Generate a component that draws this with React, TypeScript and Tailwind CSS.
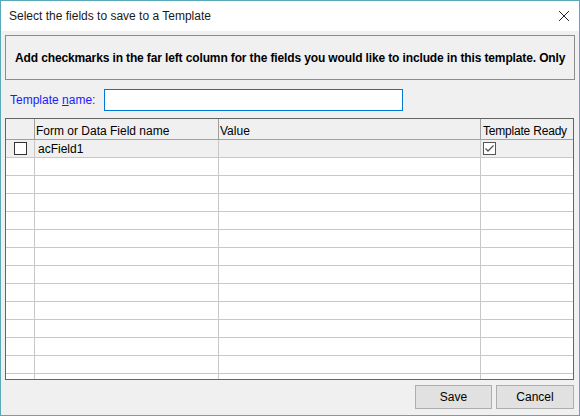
import { useState } from 'react';

const font = { fontFamily: '"Liberation Sans", Arial, sans-serif' };

const EMPTY_ROWS = 13;

function CheckBox({ checked, disabled }: { checked?: boolean; disabled?: boolean }) {
  return (
    <div
      className={`w-[13px] h-[13px] bg-white border flex items-center justify-center ${
        disabled ? 'border-[#555555]' : 'border-[#333333]'
      }`}
    >
      {checked && (
        <svg width="11" height="11" viewBox="0 0 11 11">
          <path d="M1.5 5.5 L4 8 L9.5 2.5" fill="none" stroke={disabled ? '#555' : '#333'} strokeWidth="1.3" />
        </svg>
      )}
    </div>
  );
}

export default function App() {
  const [name, setName] = useState('');

  return (
    <div
      className="w-[580px] h-[416px] border border-[#5aa8b9] bg-[#f0f0f0] flex flex-col text-[12px] text-black"
      style={font}
    >
      {/* Title bar */}
      <div className="h-[30px] bg-white flex items-center justify-between pl-[8px] pr-[9px] shrink-0">
        <span className="text-[12px] text-[#1a1a1a]">Select the fields to save to a Template</span>
        <svg width="12" height="12" viewBox="0 0 12 12">
          <path d="M1 1 L11 11 M11 1 L1 11" stroke="#222" strokeWidth="1" />
        </svg>
      </div>

      {/* Instructions */}
      <div className="mt-[4px] ml-[4px] w-[570px] h-[45px] border border-[#8c8c8c] flex items-center pl-[9px] overflow-hidden whitespace-nowrap">
        <span className="font-bold text-[12px] tracking-[-0.13px]">
          Add checkmarks in the far left column for the fields you would like to include in this template. Only
        </span>
      </div>

      {/* Template name */}
      <div className="mt-[9px] flex items-center h-[22px]">
        <label className="ml-[9px] w-[94px] text-[#1a1aff]">
          Template <span className="underline">n</span>ame:
        </label>
        <input
          value={name}
          onChange={(e) => setName(e.target.value)}
          className="w-[299px] h-[22px] bg-white border border-[#0078d7] outline-none px-1"
        />
      </div>

      {/* Grid */}
      <div className="mt-[7px] ml-[4px] w-[569px] h-[262px] border border-[#646464] bg-white overflow-hidden">
        <div className="flex h-[21px] bg-[#f0f0f0] border-b border-[#a0a0a0]">
          <div className="w-[29px] border-r border-[#a0a0a0]" />
          <div className="w-[184px] border-r border-[#a0a0a0] pl-[1px] pt-[3px]">Form or Data Field name</div>
          <div className="w-[262px] border-r border-[#a0a0a0] pl-[1px] pt-[3px]">Value</div>
          <div className="flex-1 pl-[2px] pt-[3px] tracking-[-0.2px]">Template Ready</div>
        </div>

        <div className="flex h-[18px] bg-[#f0f0f0] border-b border-[#c8c8c8]">
          <div className="w-[29px] border-r border-[#c8c8c8] flex items-center justify-center pl-[1px]">
            <CheckBox />
          </div>
          <div className="w-[184px] border-r border-[#c8c8c8] pl-[3px] flex items-center">acField1</div>
          <div className="w-[262px] border-r border-[#c8c8c8]" />
          <div className="flex-1 pl-[2px] flex items-center">
            <CheckBox checked disabled />
          </div>
        </div>

        {Array.from({ length: EMPTY_ROWS }).map((_, i) => (
          <div key={i} className="flex h-[18px] border-b border-[#c8c8c8]">
            <div className="w-[29px] border-r border-[#c8c8c8]" />
            <div className="w-[184px] border-r border-[#c8c8c8]" />
            <div className="w-[262px] border-r border-[#c8c8c8]" />
            <div className="flex-1" />
          </div>
        ))}
      </div>

      {/* Buttons */}
      <div className="mt-[5px] flex justify-end gap-[4px] pr-[5px]">
        <button className="w-[77px] h-[24px] bg-[#e1e1e1] border border-[#adadad] text-[12px]">Save</button>
        <button className="w-[78px] h-[24px] bg-[#e1e1e1] border border-[#adadad] text-[12px]">Cancel</button>
      </div>
    </div>
  );
}
